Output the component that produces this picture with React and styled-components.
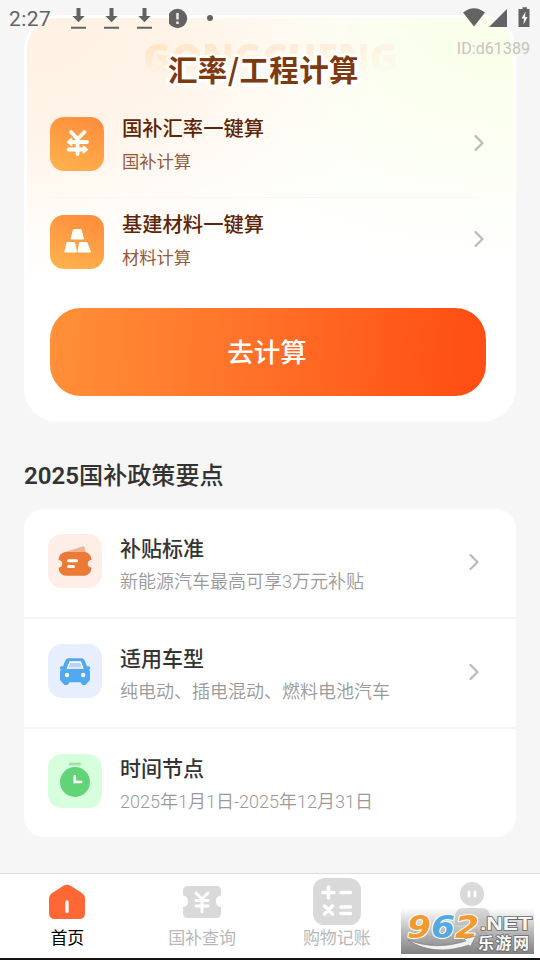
import styled, { createGlobalStyle } from 'styled-components'

const Global = createGlobalStyle`
    * { box-sizing: border-box; }
    body {
        margin: 0;
        background: #f6f6f6;
        font-family: Roboto, 'Noto Sans CJK SC', sans-serif;
    }
    h1, h2, h3, p { margin: 0; font-weight: 500; }
    svg { display: block; flex-shrink: 0; }
`

const Phone = styled.div`
    position: relative;
    display: flex;
    flex-direction: column;
    width: 540px;
    height: 960px;
    overflow: hidden;
    background: #f6f6f6;
`
const StatusWrap = styled.div`
    position: absolute;
    z-index: 2;
    top: 0;
    left: 0;
    width: 540px;
    height: 36px;
    padding: 0 9px;
    display: flex;
    align-items: center;
    justify-content: space-between;
    color: #636363;
`
const Time = styled.span`
    width: 61px;
    padding-top: 1px;
    font-size: 21px;
    line-height: 36px;
    letter-spacing: 0.4px;
`
const StatusGroup = styled.div`
    display: flex;
    align-items: center;
`
const UserId = styled.div`
    position: absolute;
    z-index: 2;
    top: 39px;
    right: 10px;
    font-size: 16.1px;
    line-height: 20px;
    color: #c3c5bd;
`
const Main = styled.main`
    flex: 1;
    padding: 15px 24px 0;
`
const CalcCard = styled.section`
    height: 407px;
    padding: 3px;
    border-radius: 34px;
    background: #fff;
`
// tinted area inside the white rim
const CalcInner = styled.div`
    height: 401px;
    padding: 0 28px 0 23px;
    border-radius: 31px;
    background:
        radial-gradient(ellipse 380px 270px at 0 0, #fff1e4 0, #fff3e7 40%, rgba(255, 249, 242, 0.6) 75%, rgba(255, 255, 255, 0) 100%),
        radial-gradient(ellipse 430px 260px at 100% 0, #f9ffe9 0, #fbfff0 40%, rgba(253, 255, 248, 0.7) 75%, rgba(255, 255, 255, 0) 100%),
        #fff;
`
const CalcHead = styled.div`
    position: relative;
    height: 99px;
    padding-top: 29px;
`
const Ghost = styled.span`
    position: absolute;
    top: 18px;
    left: 93px;
    width: 256px;
    font: 800 38.4px/42px 'Open Sans', sans-serif;
    background: linear-gradient(90deg, #ffe3c2, #ffebd6 60%, #fdf3e3);
    background-clip: text;
    color: transparent;
    mask-image: linear-gradient(#000 20%, transparent 95%);
    white-space: nowrap;
`
const CalcTitle = styled.h1`
    position: relative;
    margin-left: 118px;
    font: 700 29.5px/42px 'Noto Sans CJK SC', sans-serif;
    letter-spacing: 0.35px;
    color: #7d3a10;
    white-space: nowrap;
    text-shadow: 3px 0 #fff, -3px 0 #fff, 0 3px #fff, 0 -3px #fff,
        2px 2px #fff, -2px 2px #fff, 2px -2px #fff, -2px -2px #fff,
        0 4px 2px #fff, 4px 0 2px #fff, -4px 0 2px #fff;
`
const CalcRow = styled.div`
    display: flex;
    align-items: center;
    height: 54px;
    > svg { margin-bottom: ${props => props.$lift}px; }
`
const CalcIcon = styled.div`
    width: 54px;
    height: 54px;
    margin-right: 18px;
    border-radius: 14px;
    background: linear-gradient(20deg, #ffb44f, #ff8a3b);
`
const CalcText = styled.div`
    flex: 1;
    padding-top: ${props => props.$drop}px;
    h2 {
        font-size: 20.3px;
        line-height: 33px;
        color: #5c2505;
    }
    p {
        font-size: 17.3px;
        font-weight: 400;
        line-height: 33px;
        color: #93583d;
    }
`
const CalcLine = styled.div`
    height: 1px;
    margin: 26px 6px 17px 0;
    background: #fcf5ed;
`
const CalcButton = styled.button`
    display: block;
    width: 436px;
    height: 88px;
    margin-top: 39px;
    padding: 2px 2px 0 0;
    border: 0;
    border-radius: 31px;
    background: linear-gradient(95deg, #ff9038, #ff7028 48%, #ff4f14 95%);
    color: #fff;
    font: 500 26.5px/40px Roboto, 'Noto Sans CJK SC', sans-serif;
`
const SectionTitle = styled.h2`
    margin: 36px 0 15px;
    font-size: 24.1px;
    line-height: 36px;
    color: #333;
    b { font-weight: 600; }
`
const List = styled.section`
    border-radius: 20px;
    background: #fff;
`
const Item = styled.div`
    display: flex;
    align-items: center;
    height: ${props => props.$last ? 108 : 110}px;
    padding: 0 36px 0 24px;
    border-bottom: ${props => props.$last ? 0 : 2}px solid #f4f4f4;
    > svg { margin-bottom: 2px; }
`
const ItemIcon = styled.div`
    width: 54px;
    height: 54px;
    margin: 0 18px 5px 0;
    border-radius: 14px;
    background: ${props => props.$bg};
`
const ItemText = styled.div`
    flex: 1;
    padding-top: 5px;
    white-space: nowrap;
    h3 {
        font-size: 21px;
        line-height: 32px;
        color: #333;
    }
    p {
        font-size: 18px;
        font-weight: 350;
        line-height: 33px;
        color: #999;
    }
`
const NavBar = styled.nav`
    display: flex;
    height: 87px;
    padding-right: 1px;
    background: #fff;
    border-top: 1px solid #dcdcdc;
    border-bottom: 2px solid #17100f;
`
const Tab = styled.div`
    flex: 1;
    display: flex;
    flex-direction: column;
    align-items: center;
    gap: 1px;
    padding-top: 4px;
    font-size: 17px;
    line-height: 24px;
    color: ${props => props.$active ? '#000' : '#b7b7b7'};
`
const StampBox = styled.div`
    position: absolute;
    z-index: 3;
    left: 401px;
    top: 908px;
    width: 133px;
    height: 46px;
    background: linear-gradient(rgba(255, 255, 255, 0), rgba(170, 170, 170, 0.8) 50%, rgba(118, 118, 118, 0.92));
`

const Download = () => (
    <svg width="33" height="24" viewBox="0 0 33 24" fill="#636363">
        <path d="M6.500 2h4v8h4.200l-6.200 6.300-6.200-6.300h4.200zM1 20.700h15v2H1z" />
    </svg>
)

const Chevron = () => (
    <svg width="12" height="18" viewBox="0 0 12 18" fill="none" stroke="#bababa" strokeWidth="2.200" strokeLinecap="round" strokeLinejoin="round">
        <path d="M2.500 2l7 7-7 7" />
    </svg>
)

const YuanIcon = () => (
    <svg width="54" height="54" viewBox="0 0 54 54" fill="none" stroke="#fff" strokeWidth="3.800" strokeLinecap="round" strokeLinejoin="round">
        <path d="M21 15l6.500 7 7-7M27.500 22v15M20 25h17M18.500 32.500h16" />
        <path d="M21.500 21.800L18 25l3.500 3M33.500 29.500l3.500 3-3.500 3" strokeWidth="2" />
    </svg>
)

const BarsIcon = () => (
    <svg width="54" height="54" viewBox="0 0 54 54" fill="#fff" stroke="#fff" strokeWidth="1" strokeLinejoin="round">
        <path d="M23.500 14.500h7.500l2.500 9.500H21zM17 27.500h7.500l2 9.500H14.800zM29.500 27.500H37L40.500 37H28z" />
    </svg>
)

const TicketIcon = () => (
    <svg width="54" height="54" viewBox="0 0 54 54">
        <path d="M17 18l17.500-5.600q1.500-.4 2 1l1.500 5z" fill="#f3b18f" />
        <path d="M17 18h20q6 1 6.500 8a3.700 3.700 0 0 0 0 7.400q-.5 7-6.500 8.300H17q-6-1.300-6.500-8.300a3.700 3.700 0 0 0 0-7.400q.5-7 6.500-8z" fill="#ec7a37" />
        <path d="M20.500 26.700h8M20.500 32.600h5" stroke="#fff" strokeWidth="3" strokeLinecap="round" />
    </svg>
)

const CarIcon = () => (
    <svg width="54" height="54" viewBox="0 0 54 54">
        <path d="M20.500 14.200h13q2 0 3 2l2.500 6h1.500q1.800 0 1.800 1.800 0 1.500-1.300 1.500l1 2V36l-4.500 5h-3l-2-2.800h-11L19.500 41h-3L12 36v-8.500l1-2q-1.300 0-1.300-1.500 0-1.800 1.800-1.800H15l2.500-6q1-2 3-2z" fill="#50a8ef" />
        <path d="M22 18h10.500l2.300 6.200H19.500z" fill="#bcd0fb" stroke="#fff" strokeWidth="1.300" />
        <circle cx="19" cy="31" r="2.200" fill="#fff" />
        <circle cx="35.200" cy="31" r="2.200" fill="#fff" />
    </svg>
)

const ClockIcon = () => (
    <svg width="54" height="54" viewBox="0 0 54 54">
        <rect x="21" y="8.500" width="12" height="3" rx="1" fill="#9ae7a5" />
        <circle cx="27" cy="28" r="15" fill="#61d478" />
        <path d="M26.800 22v6h6.300" fill="none" stroke="#fff" strokeWidth="2.600" strokeLinecap="round" />
    </svg>
)

const HomeTab = () => (
    <svg width="46" height="47" viewBox="0 0 46 47">
        <path d="M19.500 7.800q3.500-2.300 7 0l11 7q3.500 2.400 3.500 6V35q0 6-6 6H11q-6 0-6-6V20.800q0-3.600 3.500-6z" fill="#ff6734" />
        <path d="M23 24v9.500" stroke="#fff" strokeWidth="3.300" strokeLinecap="round" />
    </svg>
)

const QueryTab = () => (
    <svg width="46" height="47" viewBox="0 0 46 47">
        <path d="M9 8h28q5 0 5 5v4.500a5.800 5.800 0 0 0 0 11.500v6q0 5-5 5H9q-5 0-5-5v-6a5.800 5.800 0 0 0 0-11.500V13q0-5 5-5z" fill="#d9d9d9" />
        <path d="M17 15l6 6 6-6M23 21v13M17 22.500h12M17 28h12" fill="none" stroke="#fff" strokeWidth="2.900" strokeLinecap="round" />
    </svg>
)

const CalcTab = () => (
    <svg width="48" height="47" viewBox="0 0 48 47">
        <rect width="48" height="47.500" rx="12" fill="#d9d9d9" />
        <path d="M10 14.500h11M15.500 9v11M28 14.500h9.500M11.500 28l8 8M19.500 28l-8 8M28 29h9.500M28 35.500h9.500" stroke="#fff" strokeWidth="3.500" strokeLinecap="round" />
    </svg>
)

const MineTab = () => (
    <svg width="46" height="47" viewBox="0 0 46 47">
        <circle cx="23" cy="16" r="12" fill="#d9d9d9" />
        <path d="M20 14v4M26 14v4" stroke="#fff" strokeWidth="2.800" strokeLinecap="round" />
        <path d="M6 47v-8q0-9 9-9h17q9 0 9 9v8z" fill="#d9d9d9" />
    </svg>
)

const policies = [
    { title: '补贴标准', text: '新能源汽车最高可享3万元补贴', bg: '#ffeee8', icon: <TicketIcon />, link: true },
    { title: '适用车型', text: '纯电动、插电混动、燃料电池汽车', bg: '#e7efff', icon: <CarIcon />, link: true },
    { title: '时间节点', text: '2025年1月1日-2025年12月31日', bg: '#d8ffdd', icon: <ClockIcon /> }
]

const tabs = [
    { name: '首页', icon: <HomeTab /> },
    { name: '国补查询', icon: <QueryTab /> },
    { name: '购物记账', icon: <CalcTab /> },
    { name: '我的', icon: <MineTab /> }
]

const StatusBar = () => (
    <StatusWrap>
        <StatusGroup>
            <Time>2:27</Time>
            <Download />
            <Download />
            <Download />
            <svg width="50" height="24" viewBox="0 0 50 24" fill="#636363">
                <circle cx="8.500" cy="12.500" r="9.700" />
                <circle cx="41" cy="12" r="3" />
                <path d="M8.500 7v6.500M8.500 15.500v2.500" stroke="#f2eade" strokeWidth="2.500" />
            </svg>
        </StatusGroup>
        <svg width="70" height="24" viewBox="0 0 70 24" fill="#636363">
            <path d="M2 6.500q11-8.500 22 0L13 20.500z" />
            <path d="M46 3v18H28z" />
            <path d="M59.500 3h2V1.300H66V3h2.500v18h-11V3z" />
            <path d="M64.500 5.500l-4 7H63l-.5 6 4-7.500H64z" fill="#fff" />
        </svg>
    </StatusWrap>
)

const Stamp = () => (
    <StampBox>
        <svg width="133" height="46" viewBox="0 0 133 46" fontWeight="700">
            <g fontFamily="'DejaVu Sans', sans-serif" fontSize="31.500" fontStyle="italic" stroke="#fff" strokeWidth="2" paintOrder="stroke" strokeLinejoin="round">
                <text x="6" y="30" textLength="24" lengthAdjust="spacingAndGlyphs" fill="#f39a2e">9</text>
                <text x="30" y="30" textLength="24" lengthAdjust="spacingAndGlyphs" fill="#55a9e2">6</text>
                <text x="54" y="30" textLength="24" lengthAdjust="spacingAndGlyphs" fill="#f39a2e">2</text>
            </g>
            <path d="M7 32q28 11 58 1l-2-2 12-3-6 11-1-2Q32 49 7 32z" fill="#f2f2f2" stroke="#777" strokeWidth=".6" />
            <g fill="#f8f8f8" stroke="#6a6a6a" strokeWidth="1.600" paintOrder="stroke">
                <text x="79" y="22" fontSize="19" textLength="52" lengthAdjust="spacingAndGlyphs" fontFamily="'Liberation Sans', sans-serif">.NET</text>
                <text x="77" y="41" fontSize="16" textLength="51" fontFamily="'Noto Sans CJK SC', sans-serif">乐游网</text>
            </g>
        </svg>
    </StampBox>
)

const App = () => {
    return (
        <>
            <Global />
            <Phone>
                <StatusBar />
                <UserId>ID:d61389</UserId>
                <Main>
                    <CalcCard>
                        <CalcInner>
                            <CalcHead>
                                <Ghost>GONGCHENG</Ghost>
                                <CalcTitle>汇率/工程计算</CalcTitle>
                            </CalcHead>
                            <CalcRow $lift={2}>
                                <CalcIcon><YuanIcon /></CalcIcon>
                                <CalcText $drop={3}>
                                    <h2>国补汇率一键算</h2>
                                    <p>国补计算</p>
                                </CalcText>
                                <Chevron />
                            </CalcRow>
                            <CalcLine />
                            <CalcRow $lift={6}>
                                <CalcIcon><BarsIcon /></CalcIcon>
                                <CalcText $drop={0}>
                                    <h2>基建材料一键算</h2>
                                    <p>材料计算</p>
                                </CalcText>
                                <Chevron />
                            </CalcRow>
                            <CalcButton>去计算</CalcButton>
                        </CalcInner>
                    </CalcCard>

                    <SectionTitle><b>2025</b>国补政策要点</SectionTitle>
                    <List>
                        {policies.map((item, i) => (
                            <Item key={item.title} $last={i === policies.length - 1}>
                                <ItemIcon $bg={item.bg}>{item.icon}</ItemIcon>
                                <ItemText>
                                    <h3>{item.title}</h3>
                                    <p>{item.text}</p>
                                </ItemText>
                                {item.link && <Chevron />}
                            </Item>
                        ))}
                    </List>
                </Main>

                <NavBar>
                    {tabs.map((tab, i) => (
                        <Tab key={tab.name} $active={i === 0}>
                            {tab.icon}
                            {tab.name}
                        </Tab>
                    ))}
                </NavBar>
                <Stamp />
            </Phone>
        </>
    )
}

export default App
